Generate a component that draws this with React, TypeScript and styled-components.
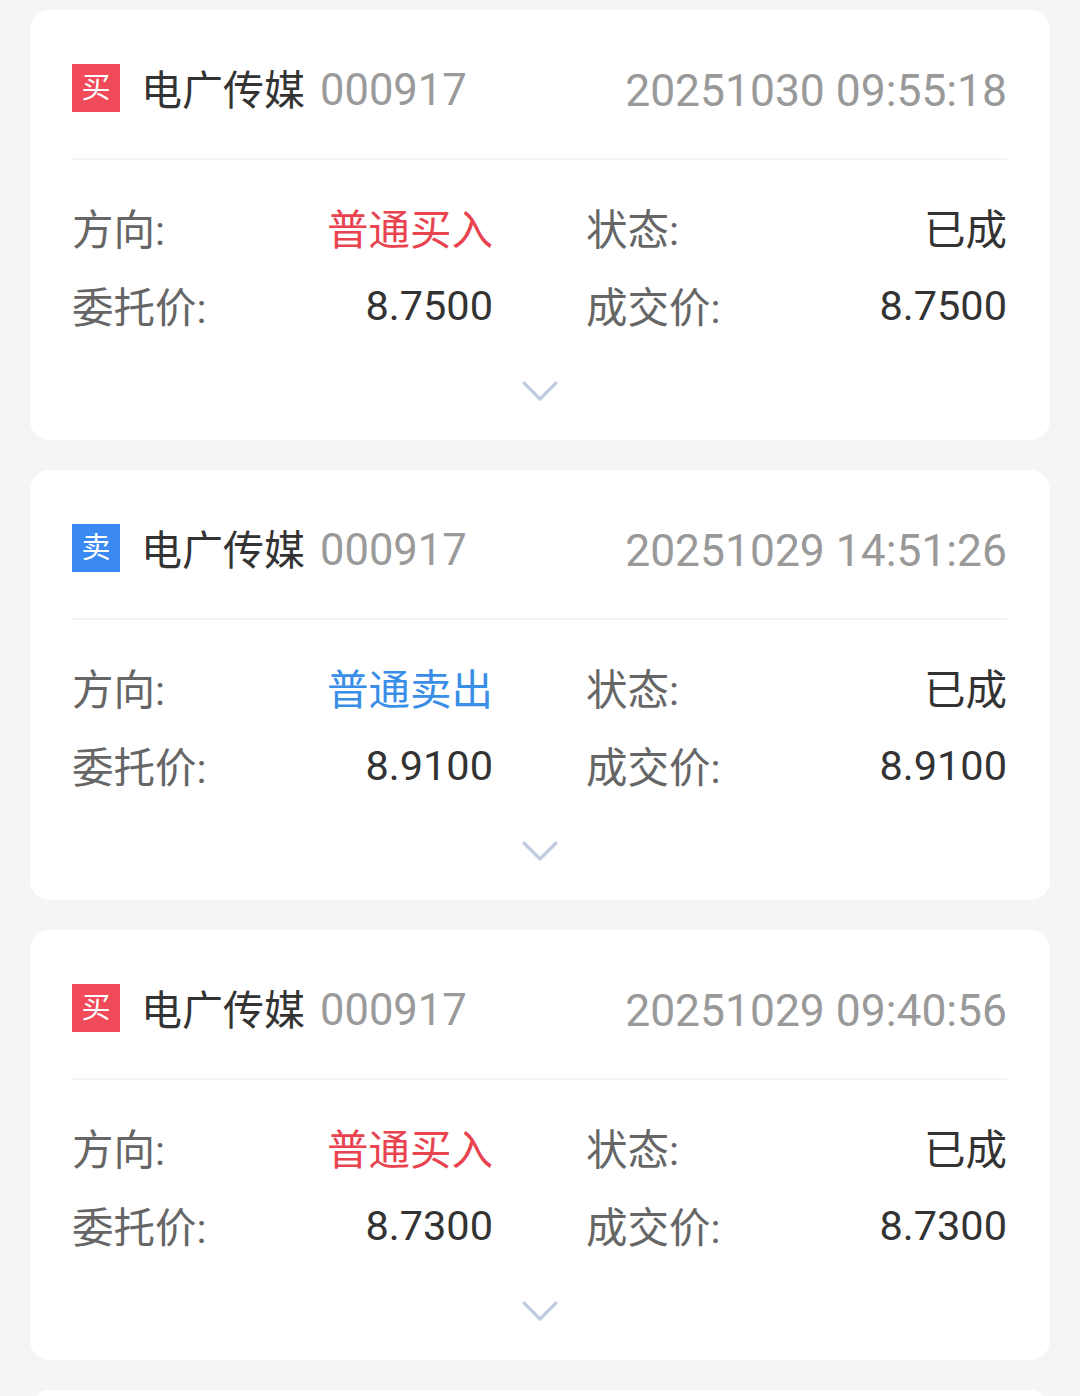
import React from 'react';
import styled, { createGlobalStyle } from 'styled-components';

const GlobalStyle = createGlobalStyle`
  html, body {
    margin: 0;
    padding: 0;
    background: #f5f5f5;
    font-family: Roboto, "Noto Sans CJK SC", sans-serif;
  }
`;

type Side = 'buy' | 'sell';

interface Order {
  side: Side;
  name: string;
  code: string;
  time: string;
  direction: string;
  status: string;
  price: string;
  dealPrice: string;
}

const orders: Order[] = [
  {
    side: 'buy',
    name: '电广传媒',
    code: '000917',
    time: '20251030 09:55:18',
    direction: '普通买入',
    status: '已成',
    price: '8.7500',
    dealPrice: '8.7500',
  },
  {
    side: 'sell',
    name: '电广传媒',
    code: '000917',
    time: '20251029 14:51:26',
    direction: '普通卖出',
    status: '已成',
    price: '8.9100',
    dealPrice: '8.9100',
  },
  {
    side: 'buy',
    name: '电广传媒',
    code: '000917',
    time: '20251029 09:40:56',
    direction: '普通买入',
    status: '已成',
    price: '8.7300',
    dealPrice: '8.7300',
  },
];

const sideColor = (side: Side) => (side === 'buy' ? '#e8434f' : '#3a8ee8');
const badgeColor = (side: Side) => (side === 'buy' ? '#f14a58' : '#3b8af3');

const Page = styled.div`
  display: flex;
  flex-direction: column;
  gap: 30px;
  padding: 10px 30px;
`;

const Card = styled.div`
  background: #fff;
  border-radius: 20px;
  padding: 0 43px 4px 42px;
`;

// top of the next card in the list, cut off by the bottom of the screen
const NextCard = styled.div`
  background: #fff;
  border-radius: 20px 20px 0 0;
  height: 20px;
`;

const Header = styled.div`
  display: flex;
  align-items: center;
  height: 48px;
  padding: 54px 0 46px;
  border-bottom: 2px solid #f3f3f3;
`;

const Badge = styled.span<{ side: Side }>`
  width: 48px;
  height: 48px;
  display: flex;
  align-items: center;
  justify-content: center;
  background: ${p => badgeColor(p.side)};
  color: #fff;
  font-size: 29px;
  line-height: 1;
`;

const Name = styled.span`
  margin-left: 21px;
  padding-top: 6px;
  font-size: 41px;
  color: #333;
  line-height: 1;
`;

const Code = styled.span`
  margin-left: 15px;
  padding-top: 6px;
  font-size: 43.5px;
  color: #9a9a9a;
  line-height: 1;
`;

const Time = styled.span`
  margin-left: auto;
  padding-top: 6px;
  font-size: 44.4px;
  color: #999;
  line-height: 1;
`;

const Grid = styled.div`
  display: grid;
  grid-template-columns: 1fr 1fr;
  column-gap: 93px;
  padding: 28px 0 2px;
`;

const Field = styled.div`
  display: flex;
  align-items: center;
  justify-content: space-between;
  height: 78px;
`;

const Label = styled.span`
  font-size: 41.5px;
  color: #666;
`;

const Value = styled.span<{ color?: string }>`
  font-size: 41.5px;
  color: ${p => p.color || '#333'};
`;

const Footer = styled.div`
  height: 90px;
  display: flex;
  align-items: center;
  justify-content: center;
`;

const Chevron = () => (
  <svg width="38" height="22" viewBox="0 0 38 22">
    <path
      d="M3 3 L19 19 L35 3"
      fill="none"
      stroke="#c2cce0"
      strokeWidth="3.2"
      strokeLinecap="round"
      strokeLinejoin="round"
    />
  </svg>
);

const OrderCard: React.FC<{ order: Order }> = ({ order }) => (
  <Card>
    <Header>
      <Badge side={order.side}>{order.side === 'buy' ? '买' : '卖'}</Badge>
      <Name>{order.name}</Name>
      <Code>{order.code}</Code>
      <Time>{order.time}</Time>
    </Header>
    <Grid>
      <Field>
        <Label>方向:</Label>
        <Value color={sideColor(order.side)}>{order.direction}</Value>
      </Field>
      <Field>
        <Label>状态:</Label>
        <Value>{order.status}</Value>
      </Field>
      <Field>
        <Label>委托价:</Label>
        <Value>{order.price}</Value>
      </Field>
      <Field>
        <Label>成交价:</Label>
        <Value>{order.dealPrice}</Value>
      </Field>
    </Grid>
    <Footer>
      <Chevron />
    </Footer>
  </Card>
);

export default function App() {
  return (
    <>
      <GlobalStyle />
      <Page>
        {orders.map((o, i) => (
          <OrderCard key={i} order={o} />
        ))}
        <NextCard />
      </Page>
    </>
  );
}
